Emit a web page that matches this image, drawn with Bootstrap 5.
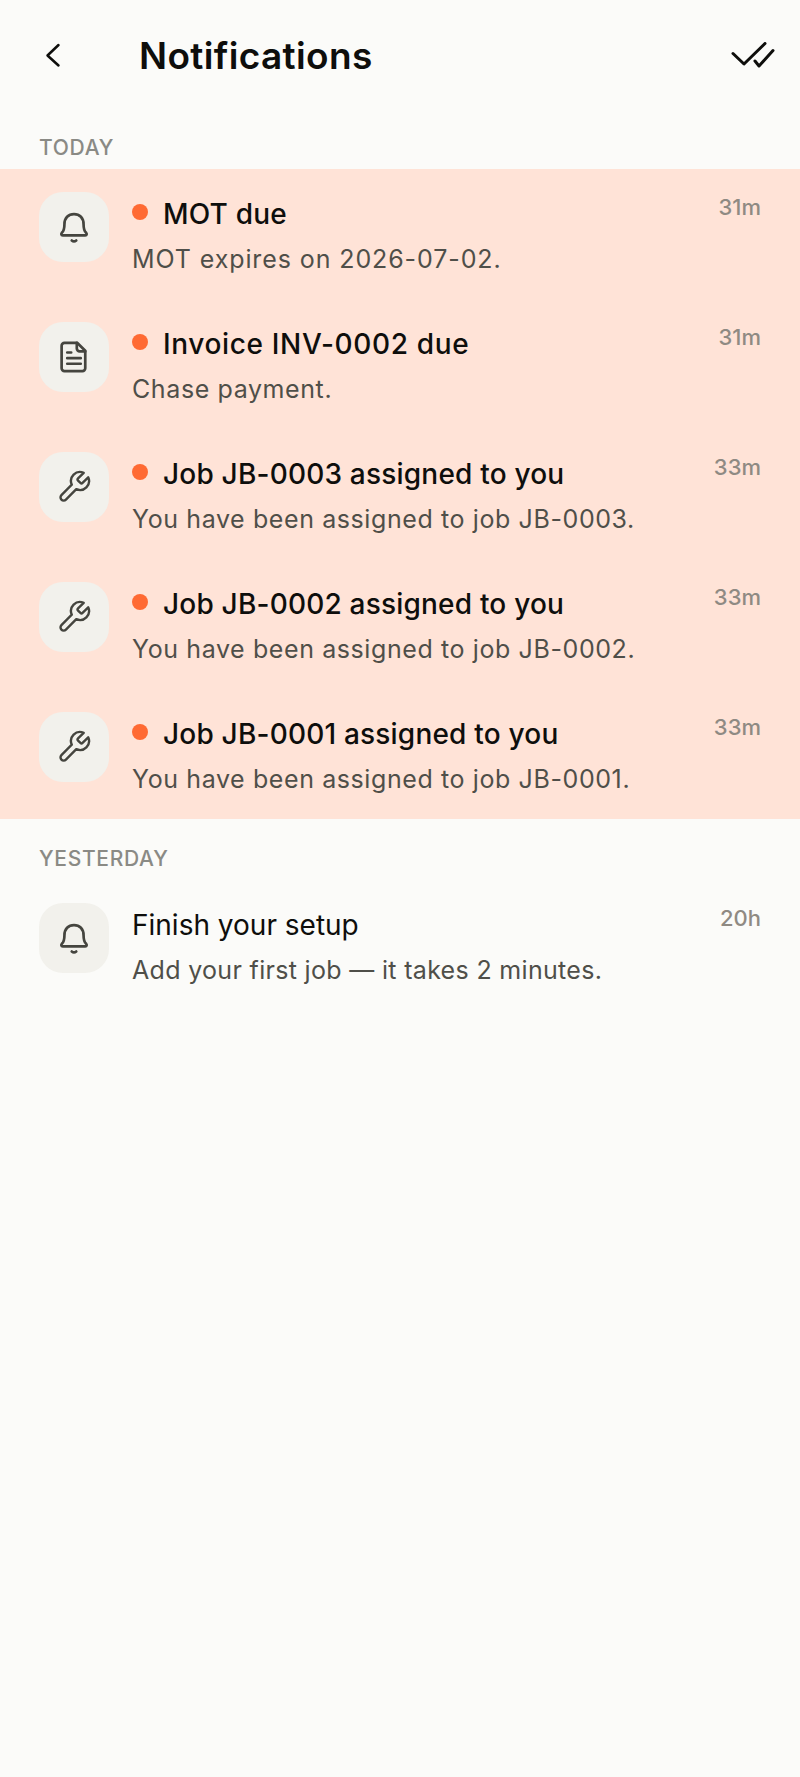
<!DOCTYPE html>
<html lang="en"><head><meta charset="utf-8"><title>Notifications</title>
<link href="https://cdn.jsdelivr.net/npm/bootstrap@5.3.0/dist/css/bootstrap.min.css" rel="stylesheet">
<style>
html,body{height:100%}
body{background:#fbfbf9;font-family:Inter,"Liberation Sans",sans-serif;color:#0e0e0c}
.topbar{height:112px;padding:0 25px 0 39px}
.back-ic{width:28px;height:28px;margin-right:72px;color:#0e0e0c}
.page-title{font-size:37px;font-weight:600;letter-spacing:.35px;margin:0 0 2px;line-height:1}
.sec-label{font-size:21px;font-weight:500;color:#8a8a85;letter-spacing:.7px;line-height:26px;padding-left:39px}
.sec-today{padding-top:23px;height:57px}
.sec-yest{padding-top:27px;height:61px}
.unread-band{background:#ffe3d7}
.note-row{height:130px;padding:23px 39px 0 39px;gap:23px}
.ic-box{width:70px;height:70px;border-radius:24px;background:#f2f1ec;color:#45453f;flex:none}
.note-body{padding-top:4px}
.dot{width:16px;height:16px;border-radius:50%;background:#ff6a33;flex:none;margin-right:15px;margin-top:8px}
.note-title{font-size:28px;font-weight:500;letter-spacing:.2px;line-height:36px;white-space:nowrap}
.note-title.plain{font-weight:400;letter-spacing:0}
.note-title.wide{letter-spacing:.65px}
.note-sub{font-size:25px;color:#4f4f49;line-height:36px;margin-top:9px;letter-spacing:.6px;white-space:nowrap}
.note-sub.wide{letter-spacing:.9px}
.note-sub.tight{letter-spacing:.32px}
.note-time{font-size:22px;font-weight:500;color:#8f8a83;line-height:26px;flex:none;margin-left:auto;margin-top:-2px}
</style></head>
<body>
<header class="topbar d-flex align-items-center">
  <svg class="back-ic" viewBox="0 0 28 28" fill="none" stroke="currentColor" stroke-width="2.500" stroke-linecap="round" stroke-linejoin="round"><path d="M19.500 3 8.500 13.500l11 10"/></svg>
  <h1 class="page-title">Notifications</h1>
  <svg class="ms-auto" width="44" height="28" viewBox="0 0 44 28" fill="none" stroke="#0e0e0c" stroke-width="3" stroke-linecap="round" stroke-linejoin="round"><path d="M2 11.500 13 22 34 1.500"/><path d="M24 19l4 5L42 8.500"/></svg>
</header>
<div class="sec-label sec-today">TODAY</div>
<div class="unread-band">
  <div class="note-row d-flex">
    <div class="ic-box d-flex align-items-center justify-content-center"><svg width="36" height="36" viewBox="0 0 32 32" fill="none" stroke="currentColor" stroke-width="2.400" stroke-linecap="round" stroke-linejoin="round"><path d="M6 23.500h20c1.500 0 1.500-1.500.8-2.300C25 19.500 24.500 17 24.500 13.500 24.500 8 21 4.500 16 4.500S7.500 8 7.500 13.500c0 3.500-.5 6-2.300 7.700-.7.800-.7 2.300.8 2.300Z"/><path d="M14 28c1.200 1 2.800 1 4 0"/></svg></div>
    <div class="flex-grow-1 note-body">
      <div class="d-flex align-items-start"><span class="dot"></span><span class="note-title">MOT due</span><span class="note-time">31m</span></div>
      <div class="note-sub wide">MOT expires on 2026-07-02.</div>
    </div>
  </div>
  <div class="note-row d-flex">
    <div class="ic-box d-flex align-items-center justify-content-center"><svg width="36" height="36" viewBox="0 0 32 32" fill="none" stroke="currentColor" stroke-width="2.400" stroke-linecap="round" stroke-linejoin="round"><path d="M7.500 3.500h11.500l7 7v15.500a2.500 2.500 0 0 1-2.500 2.500h-16A2.500 2.500 0 0 1 5 26V6a2.500 2.500 0 0 1 2.500-2.500Z"/><path d="M18.500 3.500v5a2.500 2.500 0 0 0 2.500 2.500h5"/><path d="M10 12h3.500M10 17h12M10 22h12"/></svg></div>
    <div class="flex-grow-1 note-body">
      <div class="d-flex align-items-start"><span class="dot"></span><span class="note-title wide">Invoice INV-0002 due</span><span class="note-time">31m</span></div>
      <div class="note-sub">Chase payment.</div>
    </div>
  </div>
  <div class="note-row d-flex">
    <div class="ic-box d-flex align-items-center justify-content-center"><svg width="36" height="36" viewBox="0 0 24 24" fill="none" stroke="currentColor" stroke-width="1.600" stroke-linecap="round" stroke-linejoin="round"><path d="M14.700 6.300a1 1 0 0 0 0 1.400l1.600 1.600a1 1 0 0 0 1.400 0l3.770-3.770a6 6 0 0 1-7.940 7.940l-6.910 6.910a2.120 2.120 0 0 1-3-3l6.910-6.910a6 6 0 0 1 7.940-7.940l-3.760 3.760Z"/></svg></div>
    <div class="flex-grow-1 note-body">
      <div class="d-flex align-items-start"><span class="dot"></span><span class="note-title">Job JB-0003 assigned to you</span><span class="note-time">33m</span></div>
      <div class="note-sub">You have been assigned to job JB-0003.</div>
    </div>
  </div>
  <div class="note-row d-flex">
    <div class="ic-box d-flex align-items-center justify-content-center"><svg width="36" height="36" viewBox="0 0 24 24" fill="none" stroke="currentColor" stroke-width="1.600" stroke-linecap="round" stroke-linejoin="round"><path d="M14.700 6.300a1 1 0 0 0 0 1.400l1.600 1.600a1 1 0 0 0 1.400 0l3.770-3.770a6 6 0 0 1-7.940 7.940l-6.910 6.910a2.120 2.120 0 0 1-3-3l6.910-6.910a6 6 0 0 1 7.940-7.940l-3.760 3.760Z"/></svg></div>
    <div class="flex-grow-1 note-body">
      <div class="d-flex align-items-start"><span class="dot"></span><span class="note-title">Job JB-0002 assigned to you</span><span class="note-time">33m</span></div>
      <div class="note-sub">You have been assigned to job JB-0002.</div>
    </div>
  </div>
  <div class="note-row d-flex">
    <div class="ic-box d-flex align-items-center justify-content-center"><svg width="36" height="36" viewBox="0 0 24 24" fill="none" stroke="currentColor" stroke-width="1.600" stroke-linecap="round" stroke-linejoin="round"><path d="M14.700 6.300a1 1 0 0 0 0 1.400l1.600 1.600a1 1 0 0 0 1.400 0l3.770-3.770a6 6 0 0 1-7.940 7.940l-6.910 6.910a2.120 2.120 0 0 1-3-3l6.910-6.910a6 6 0 0 1 7.940-7.940l-3.760 3.760Z"/></svg></div>
    <div class="flex-grow-1 note-body">
      <div class="d-flex align-items-start"><span class="dot"></span><span class="note-title">Job JB-0001 assigned to you</span><span class="note-time">33m</span></div>
      <div class="note-sub">You have been assigned to job JB-0001.</div>
    </div>
  </div>
</div>
<div class="sec-label sec-yest">YESTERDAY</div>
<div class="note-row d-flex">
  <div class="ic-box d-flex align-items-center justify-content-center"><svg width="36" height="36" viewBox="0 0 32 32" fill="none" stroke="currentColor" stroke-width="2.400" stroke-linecap="round" stroke-linejoin="round"><path d="M6 23.500h20c1.500 0 1.500-1.500.8-2.300C25 19.500 24.500 17 24.500 13.500 24.500 8 21 4.500 16 4.500S7.500 8 7.500 13.500c0 3.500-.5 6-2.300 7.700-.7.800-.7 2.300.8 2.300Z"/><path d="M14 28c1.200 1 2.800 1 4 0"/></svg></div>
  <div class="flex-grow-1 note-body">
    <div class="d-flex align-items-start"><span class="note-title plain">Finish your setup</span><span class="note-time">20h</span></div>
    <div class="note-sub tight">Add your first job — it takes 2 minutes.</div>
  </div>
</div>
<script src="https://cdn.jsdelivr.net/npm/bootstrap@5.3.0/dist/js/bootstrap.bundle.min.js"></script>
</body></html>
